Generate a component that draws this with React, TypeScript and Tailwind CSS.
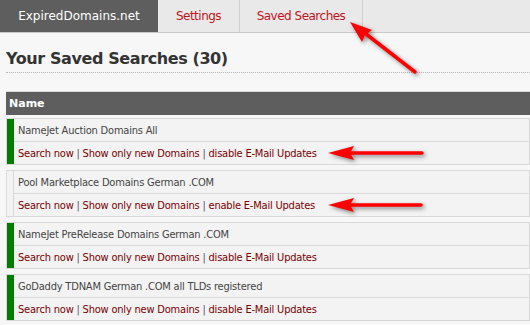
import React from "react";

type Search = { name: string; active: boolean };

const searches: Search[] = [
  { name: "NameJet Auction Domains All", active: true },
  { name: "Pool Marketplace Domains German .COM", active: false },
  { name: "NameJet PreRelease Domains German .COM", active: true },
  { name: "GoDaddy TDNAM German .COM all TLDs registered", active: true },
];

function SearchRow({ s }: { s: Search }) {
  return (
    <div className="flex border border-[#d9d9d9] bg-[#f3f3f3] mb-[5px]">
      {s.active ? (
        <div className="w-[7px] bg-[#007d00]" />
      ) : (
        <div className="w-[7px] border-r border-[#d9d9d9]" />
      )}
      <div className="flex-1">
        <div className="h-[23px] border-b border-[#d9d9d9] pl-[4px] leading-[23px] text-[#444]">
          {s.name}
        </div>
        <div className="h-[22px] pl-[4px] leading-[23px] text-[#555]">
          <a className="text-[#7a0000]">Search now</a> |{" "}
          <a className="text-[#7a0000]">Show only new Domains</a> |{" "}
          <a className="text-[#7a0000]">
            {s.active ? "disable" : "enable"} E-Mail Updates
          </a>
        </div>
      </div>
    </div>
  );
}

function Arrows() {
  return (
    <svg
      className="absolute left-0 top-0 pointer-events-none"
      width={530}
      height={325}
      style={{ filter: "drop-shadow(2px 2px 2px rgba(0,0,0,0.45))" }}
    >
      {/* diagonal arrow to the tab */}
      <line x1={415} y1={72} x2={366} y2={34} stroke="#f00" strokeWidth={3.5} strokeLinecap="round" />
      <polygon points="350,22 372,30 365,35 362,42" fill="#f00" />
      {/* horizontal arrows */}
      <line x1={422} y1={153} x2={348} y2={153} stroke="#f00" strokeWidth={3.5} strokeLinecap="round" />
      <polygon points="328,153 354,146 350,153 354,160" fill="#f00" />
      <line x1={421} y1={205} x2={348} y2={205} stroke="#f00" strokeWidth={3.5} strokeLinecap="round" />
      <polygon points="328,205 354,198 350,205 354,212" fill="#f00" />
    </svg>
  );
}

export default function App() {
  return (
    <div
      className="relative w-[530px] h-[325px] overflow-hidden bg-[#f7f7f7] text-[11px] tracking-[-0.2px]"
      style={{ fontFamily: '"DejaVu Sans Condensed", "DejaVu Sans", sans-serif' }}
    >
      {/* Tabs */}
      <div
        className="flex h-[33px] bg-[#e9e9e9] border-b border-[#c9c9c9] text-[12px] tracking-normal"
        style={{ fontFamily: '"DejaVu Sans", sans-serif' }}
      >
        <div className="w-[158px] bg-[#5e5e5e] text-white flex items-center justify-center">
          ExpiredDomains.net
        </div>
        <div className="w-[82px] border-r border-[#cfcfcf] text-[#c0141c] flex items-center justify-center tracking-[-0.5px]">
          Settings
        </div>
        <div className="w-[123px] border-r border-[#cfcfcf] text-[#c0141c] flex items-center justify-center tracking-[-0.5px]">
          Saved Searches
        </div>
      </div>

      <div className="pl-[6px]">
        <h1
          className="pt-[14px] pb-[1px] text-[16px] leading-[24px] font-bold text-[#333] tracking-[-0.4px] border-b border-dotted border-[#b5b5b5]"
          style={{ fontFamily: '"DejaVu Sans", sans-serif' }}
        >
          Your Saved Searches (30)
        </h1>

        <div className="mt-[18px] border-t border-[#d9d9d9]">
          <div
            className="h-[23px] bg-[#5e5e5e] text-white font-bold leading-[23px] pl-[3px] tracking-normal"
            style={{ fontFamily: '"DejaVu Sans", sans-serif' }}
          >
            Name
          </div>
        </div>
        <div className="mt-[3px]">
          {searches.map((s) => (
            <SearchRow key={s.name} s={s} />
          ))}
        </div>
      </div>

      <Arrows />
    </div>
  );
}
